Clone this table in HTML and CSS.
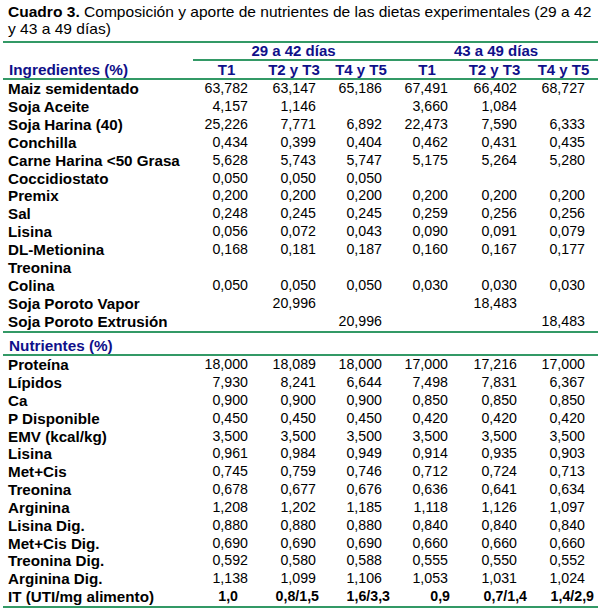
FILE: index.html
```html
<!DOCTYPE html>
<html lang="es">
<head>
<meta charset="utf-8">
<title>Cuadro 3</title>
<link rel="stylesheet" href="styles.css">
</head>
<body>
<div class="page">
  <p class="title"><b>Cuadro 3.</b> <span>Composición y aporte de nutrientes de las dietas experimentales (29 a 42<br>y 43 a 49 días)</span></p>
  <table class="tbl">
    <colgroup>
      <col class="w-label"><col class="w1"><col class="w2"><col class="w3"><col class="w4"><col class="w5"><col class="w6">
    </colgroup>
    <thead>
      <tr class="grp">
        <th class="blank"></th>
        <th colspan="3" class="g1">29 a 42 días</th>
        <th colspan="3" class="g2">43 a 49 días</th>
      </tr>
      <tr class="hdr">
        <th class="lab">Ingredientes (%)</th>
        <th>T1</th><th>T2 y T3</th><th>T4 y T5</th><th>T1</th><th>T2 y T3</th><th>T4 y T5</th>
      </tr>
    </thead>
    <tbody class="ing">
      <tr><td class="lab">Maiz semidentado</td><td>63,782</td><td>63,147</td><td>65,186</td><td>67,491</td><td>66,402</td><td>68,727</td></tr>
      <tr><td class="lab">Soja Aceite</td><td>4,157</td><td>1,146</td><td></td><td>3,660</td><td>1,084</td><td></td></tr>
      <tr><td class="lab">Soja Harina (40)</td><td>25,226</td><td>7,771</td><td>6,892</td><td>22,473</td><td>7,590</td><td>6,333</td></tr>
      <tr><td class="lab">Conchilla</td><td>0,434</td><td>0,399</td><td>0,404</td><td>0,462</td><td>0,431</td><td>0,435</td></tr>
      <tr><td class="lab">Carne Harina &lt;50 Grasa</td><td>5,628</td><td>5,743</td><td>5,747</td><td>5,175</td><td>5,264</td><td>5,280</td></tr>
      <tr><td class="lab">Coccidiostato</td><td>0,050</td><td>0,050</td><td>0,050</td><td></td><td></td><td></td></tr>
      <tr><td class="lab">Premix</td><td>0,200</td><td>0,200</td><td>0,200</td><td>0,200</td><td>0,200</td><td>0,200</td></tr>
      <tr><td class="lab">Sal</td><td>0,248</td><td>0,245</td><td>0,245</td><td>0,259</td><td>0,256</td><td>0,256</td></tr>
      <tr><td class="lab">Lisina</td><td>0,056</td><td>0,072</td><td>0,043</td><td>0,090</td><td>0,091</td><td>0,079</td></tr>
      <tr><td class="lab">DL-Metionina</td><td>0,168</td><td>0,181</td><td>0,187</td><td>0,160</td><td>0,167</td><td>0,177</td></tr>
      <tr><td class="lab">Treonina</td><td></td><td></td><td></td><td></td><td></td><td></td></tr>
      <tr><td class="lab">Colina</td><td>0,050</td><td>0,050</td><td>0,050</td><td>0,030</td><td>0,030</td><td>0,030</td></tr>
      <tr><td class="lab">Soja Poroto Vapor</td><td></td><td>20,996</td><td></td><td></td><td>18,483</td><td></td></tr>
      <tr class="last"><td class="lab">Soja Poroto Extrusión</td><td></td><td></td><td>20,996</td><td></td><td></td><td>18,483</td></tr>
    </tbody>
    <tbody class="nut">
      <tr class="sec"><th class="lab" colspan="7">Nutrientes (%)</th></tr>
      <tr><td class="lab">Proteína</td><td>18,000</td><td>18,089</td><td>18,000</td><td>17,000</td><td>17,216</td><td>17,000</td></tr>
      <tr><td class="lab">Lípidos</td><td>7,930</td><td>8,241</td><td>6,644</td><td>7,498</td><td>7,831</td><td>6,367</td></tr>
      <tr><td class="lab">Ca</td><td>0,900</td><td>0,900</td><td>0,900</td><td>0,850</td><td>0,850</td><td>0,850</td></tr>
      <tr><td class="lab">P Disponible</td><td>0,450</td><td>0,450</td><td>0,450</td><td>0,420</td><td>0,420</td><td>0,420</td></tr>
      <tr><td class="lab">EMV (kcal/kg)</td><td>3,500</td><td>3,500</td><td>3,500</td><td>3,500</td><td>3,500</td><td>3,500</td></tr>
      <tr><td class="lab">Lisina</td><td>0,961</td><td>0,984</td><td>0,949</td><td>0,914</td><td>0,935</td><td>0,903</td></tr>
      <tr><td class="lab">Met+Cis</td><td>0,745</td><td>0,759</td><td>0,746</td><td>0,712</td><td>0,724</td><td>0,713</td></tr>
      <tr><td class="lab">Treonina</td><td>0,678</td><td>0,677</td><td>0,676</td><td>0,636</td><td>0,641</td><td>0,634</td></tr>
      <tr><td class="lab">Arginina</td><td>1,208</td><td>1,202</td><td>1,185</td><td>1,118</td><td>1,126</td><td>1,097</td></tr>
      <tr><td class="lab">Lisina Dig.</td><td>0,880</td><td>0,880</td><td>0,880</td><td>0,840</td><td>0,840</td><td>0,840</td></tr>
      <tr><td class="lab">Met+Cis Dig.</td><td>0,690</td><td>0,690</td><td>0,690</td><td>0,660</td><td>0,660</td><td>0,660</td></tr>
      <tr><td class="lab">Treonina Dig.</td><td>0,592</td><td>0,580</td><td>0,588</td><td>0,555</td><td>0,550</td><td>0,552</td></tr>
      <tr><td class="lab">Arginina Dig.</td><td>1,138</td><td>1,099</td><td>1,106</td><td>1,053</td><td>1,031</td><td>1,024</td></tr>
      <tr class="last it"><td class="lab">IT (UTI/mg alimento)</td><td class="it1">1,0</td><td class="it2">0,8/1,5</td><td class="it3">1,6/3,3</td><td class="it4">0,9</td><td class="it5">0,7/1,4</td><td class="it6">1,4/2,9</td></tr>
    </tbody>
  </table>
</div>
</body>
</html>
```

FILE: styles.css
```css
html, body {
  margin: 0;
  padding: 0;
  background: #ffffff;
}

.page {
  width: 600px;
  font-family: "Liberation Sans", Arial, sans-serif;
  color: #000000;
}

.title {
  margin: 0;
  padding: 4px 0 4px 8px;
  font-size: 15.55px;
  line-height: 16.5px;
  white-space: nowrap;
}

.title b {
  font-weight: bold;
}

.tbl {
  margin-left: 3px;
  width: 595px;
  table-layout: fixed;
  border-collapse: separate;
  border-spacing: 0;
  border-top: 2px solid #339966;
  font-size: 14.2px;
}

.w-label { width: 190px; }
.w1 { width: 67px; }
.w2 { width: 68px; }
.w3 { width: 66px; }
.w4 { width: 66px; }
.w5 { width: 69px; }
.w6 { width: 69px; }

.tbl th,
.tbl td {
  padding: 0;
  white-space: nowrap;
}

thead th {
  color: #10108a;
  font-weight: bold;
  text-align: center;
  font-size: 15px;
}

.grp th {
  line-height: 16px;
}

.grp th.g1,
.grp th.g2 {
  border-bottom: 2px solid #339966;
}

.hdr th {
  line-height: 17px;
  border-bottom: 2px solid #339966;
}

.tbl th.lab,
.tbl td.lab {
  text-align: left;
  padding-left: 5px;
  font-weight: bold;
  font-size: 15.2px;
}

.hdr th.lab,
.sec th.lab {
  color: #10108a;
  padding-left: 6px;
  font-size: 15.3px;
}

.tbl td {
  text-align: right;
  padding-right: 12px;
  line-height: 17.9px;
}

.tbl td:last-child {
  padding-right: 13px;
}

.nut td {
  line-height: 17.85px;
}

.last td {
  border-bottom: 2px solid #339966;
}

.sec th {
  padding-top: 4px;
  line-height: 17.5px;
  border-bottom: 2px solid #339966;
}

.it td {
  font-weight: bold;
}

.tbl td.it1 { padding-right: 22px; }
.tbl td.it2 { padding-right: 9px; }
.tbl td.it3 { padding-right: 4px; }
.tbl td.it4 { padding-right: 10px; }
.tbl td.it5 { padding-right: 2px; }
.tbl td.it6 { padding-right: 4px; }
```
